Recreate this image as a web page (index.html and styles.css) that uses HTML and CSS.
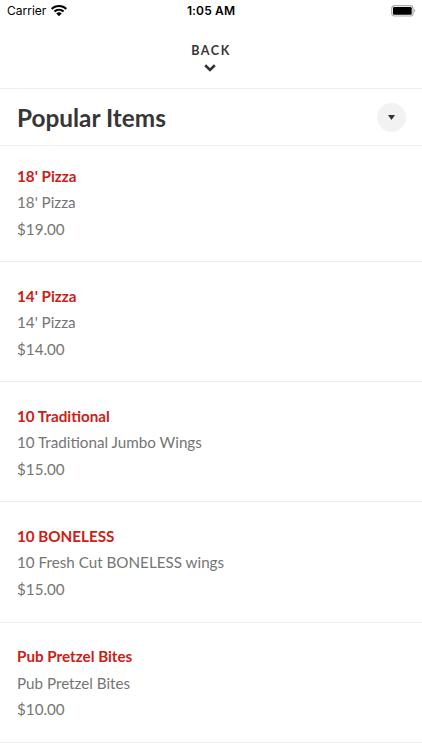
FILE: index.html
```html
<!DOCTYPE html>
<html lang="en">
<head>
<meta charset="utf-8">
<title>Popular Items</title>
<link rel="stylesheet" href="styles.css">
</head>
<body>
<div class="status">
  <div class="carrier">Carrier
    <svg width="16" height="12" viewBox="0 0 16 12"><path d="M8 0C4.900 0 2.100 1.200 0 3.200l1.500 1.500C3.200 3 5.500 2.100 8 2.100s4.800.9 6.500 2.600L16 3.200C13.900 1.200 11.100 0 8 0zM8 3.700c-2 0-3.900.8-5.300 2.100l1.500 1.500C5.200 6.300 6.500 5.700 8 5.700s2.800.6 3.800 1.600l1.500-1.500C11.900 4.500 10 3.700 8 3.700zM8 7.300c-1.100 0-2 .4-2.700 1.100L8 11.200l2.700-2.800C10 7.700 9.100 7.300 8 7.300z"/></svg>
  </div>
  <div class="time">1:05 AM</div>
  <svg class="battery" width="25" height="12" viewBox="0 0 25 12"><rect x=".7" y=".7" width="21.300" height="10.300" rx="2.800" fill="none" stroke="#aaa" stroke-width="1.200"/><rect x="2" y="2" width="18.700" height="7.700" rx="1.300"/><path d="M23.200 4c1.500.5 1.500 3 0 3.600z" fill="#aaa"/></svg>
</div>
<header class="back">
  <span>BACK</span>
  <svg width="12" height="8" viewBox="0 0 12 8"><path d="M1.200 1.300L6 6l4.800-4.700" fill="none" stroke="#333" stroke-width="2.600"/></svg>
</header>
<section class="heading">
  <h1>Popular Items</h1>
  <button class="toggle" aria-label="Toggle"><svg width="7" height="5" viewBox="0 0 7 5"><path d="M0 0h7L3.500 5z" fill="#333"/></svg></button>
</section>
<main>
  <article class="item"><h2>18' Pizza</h2><p>18' Pizza</p><p>$19.00</p></article>
  <article class="item"><h2>14' Pizza</h2><p>14' Pizza</p><p>$14.00</p></article>
  <article class="item"><h2>10 Traditional</h2><p>10 Traditional Jumbo Wings</p><p>$15.00</p></article>
  <article class="item"><h2>10 BONELESS</h2><p>10 Fresh Cut BONELESS wings</p><p>$15.00</p></article>
  <article class="item"><h2>Pub Pretzel Bites</h2><p>Pub Pretzel Bites</p><p>$10.00</p></article>
</main>
</body>
</html>
```
FILE: styles.css
```css
* { box-sizing: border-box; }
body { margin: 0; height: 750px; overflow: hidden; background: #fff; font-family: Lato, sans-serif; color: #363636; }
svg { display: block; }
.status { height: 22px; padding: 0 6px 0 7px; display: grid; grid-template-columns: 1fr auto 1fr; align-items: center; font: 12px/22px Inter, sans-serif; color: #000; }
.carrier { display: flex; gap: 5px; align-items: center; }
.time { font-weight: 600; letter-spacing: .15px; margin-right: 1px; }
.battery { justify-self: end; }
.back { height: 67px; padding-top: 20px; display: flex; flex-direction: column; align-items: center; gap: 3.500px; border-bottom: 1px solid #eee; font-weight: 700; font-size: 12.500px; line-height: 18px; letter-spacing: 1.600px; }
.back span { margin-right: 0; }
.back svg { margin-right: 1.500px; }
.heading { height: 57px; padding: 0 16.500px 0 16.600px; display: flex; align-items: center; justify-content: space-between; border-bottom: 1px solid #eee; }
h1 { margin: 0; font-size: 25px; line-height: 32px; font-weight: 700; transform: scaleX(.974); transform-origin: left; }
.toggle { width: 29px; height: 29px; padding: 0; border: 0; border-radius: 50%; background: #f2f2f2; display: grid; place-items: center; }
.item { height: 120.200px; padding: 20.500px 16.700px 0; border-bottom: 1px solid #eee; font-size: 16px; line-height: 26.500px; color: #757575; }
.item:first-child { height: 116px; padding-top: 16.500px; }
h2, p { margin: 0; font-size: inherit; transform: scaleX(.95); transform-origin: left; }
h2 { color: #cb2014; font-weight: 700; }
```
